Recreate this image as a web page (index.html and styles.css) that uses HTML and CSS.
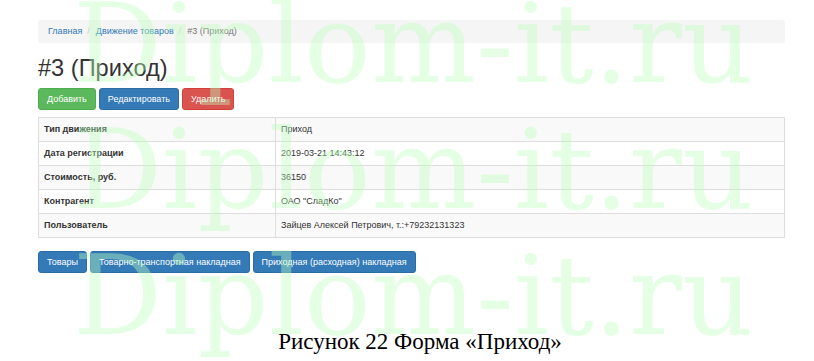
FILE: index.html
```html
<!DOCTYPE html>
<html lang="ru">
<head>
<meta charset="utf-8">
<title>#3 (Приход)</title>
<link rel="stylesheet" href="styles.css">
</head>
<body>
<div class="page">
  <ol class="breadcrumb">
    <li><a href="#">Главная</a></li>
    <li class="sep">/</li>
    <li><a href="#">Движение товаров</a></li>
    <li class="sep">/</li>
    <li class="active">#3 (Приход)</li>
  </ol>
  <h1 class="title">#3 (Приход)</h1>
  <div class="btn-row">
    <a class="btn btn-success" href="#">Добавить</a>
    <a class="btn btn-primary" href="#">Редактировать</a>
    <a class="btn btn-danger" href="#">Удалить</a>
  </div>
  <table class="detail">
    <tr><th>Тип движения</th><td>Приход</td></tr>
    <tr><th>Дата регистрации</th><td>2019-03-21 14:43:12</td></tr>
    <tr><th>Стоимость, руб.</th><td>36150</td></tr>
    <tr><th>Контрагент</th><td>ОАО "СладКо"</td></tr>
    <tr><th>Пользователь</th><td>Зайцев Алексей Петрович, т.:+79232131323</td></tr>
  </table>
  <div class="btn-row">
    <a class="btn btn-primary" href="#">Товары</a>
    <a class="btn btn-primary" href="#">Товарно-транспортная накладная</a>
    <a class="btn btn-primary" href="#">Приходная (расходная) накладная</a>
  </div>
</div>
<p class="caption">Рисунок 22 Форма «Приход»</p>
<div class="watermark" aria-hidden="true">
  <div class="wm-line">Diplom-it.ru</div>
  <div class="wm-line">Diplom-it.ru</div>
  <div class="wm-line">Diplom-it.ru</div>
</div>
</body>
</html>
```

FILE: styles.css
```css
html, body {
  margin: 0;
  padding: 0;
  background: #fff;
}
body {
  position: relative;
  width: 814px;
  height: 361px;
  overflow: hidden;
  font-family: "Liberation Sans", Arial, Helvetica, sans-serif;
  font-size: 9px;
  line-height: 13px;
  color: #333;
}
.page {
  width: 747px;
  padding: 20px 0 0 38px;
}
.breadcrumb {
  display: flex;
  list-style: none;
  margin: 0 0 13px 0;
  padding: 5px 10px;
  height: 13px;
  background: #f5f5f5;
  border-radius: 3px;
}
.breadcrumb a {
  color: #337ab7;
  text-decoration: none;
}
.breadcrumb .sep {
  color: #ccc;
  padding: 0 6px 0 5px;
}
.breadcrumb .active {
  color: #777;
}
.title {
  margin: 0 0 7px 0;
  font-size: 23.6px;
  line-height: 25px;
  font-weight: 500;
  color: #333;
}
.btn-row {
  display: flex;
  gap: 3px;
}
.btn {
  display: block;
  padding: 4px 8px;
  line-height: 12px;
  font-size: 9px;
  color: #fff;
  text-decoration: none;
  border: 1px solid transparent;
  border-radius: 3px;
}
.btn-success { background: #5cb85c; border-color: #4cae4c; }
.btn-primary { background: #337ab7; border-color: #2e6da4; }
.btn-danger { background: #d9534f; border-color: #d43f3a; }
.detail {
  width: 747px;
  margin: 7px 0 13px 0;
  border-collapse: collapse;
  border: 1px solid #ddd;
}
.detail th, .detail td {
  padding: 5px;
  line-height: 13px;
  border: 1px solid #ddd;
  text-align: left;
  vertical-align: top;
}
.detail th {
  width: 226px;
  font-weight: bold;
}
.detail tr:nth-child(odd) {
  background: #f9f9f9;
}
.caption {
  margin: 0;
  padding: 55px 0 0 26px;
  text-align: center;
  font-family: "Liberation Serif", "Times New Roman", serif;
  font-size: 23px;
  line-height: 28px;
  color: #000;
}
.watermark {
  position: absolute;
  left: 73px;
  top: -19px;
  pointer-events: none;
  font-family: "DejaVu Serif", serif;
  font-size: 111px;
  line-height: 126px;
  color: rgba(190, 255, 190, 0.4);
  white-space: nowrap;
}
```
